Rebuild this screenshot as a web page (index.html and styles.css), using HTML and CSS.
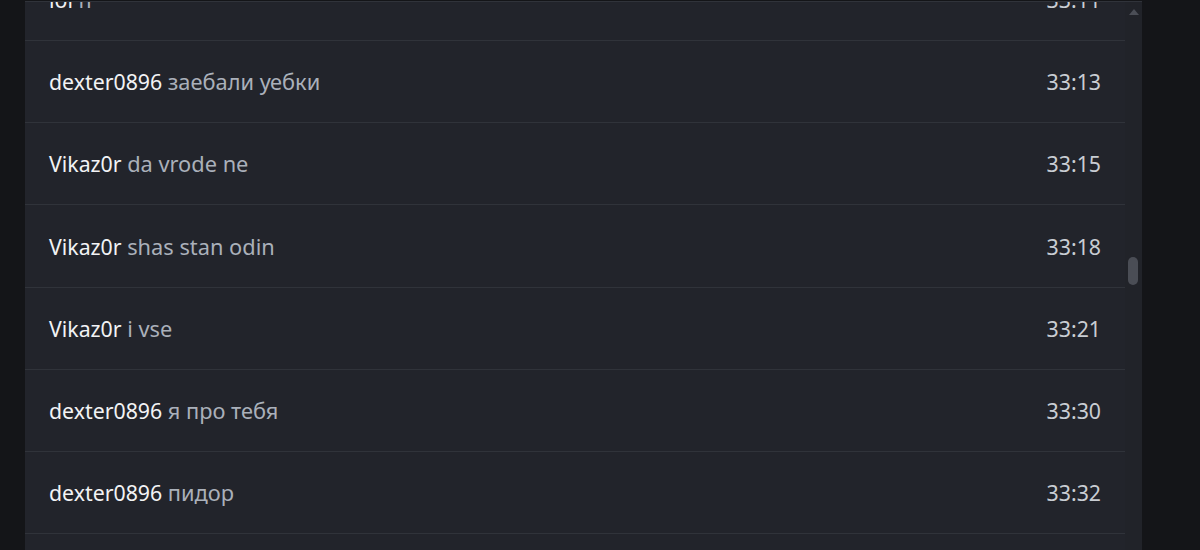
FILE: index.html
```html
<!DOCTYPE html>
<html>
<head>
<meta charset="utf-8">
<link rel="stylesheet" href="styles.css">
</head>
<body>
<div class="panel">
  <div class="list">
    <div class="rows">
      <div class="row"><div class="msg"><span class="user">lol</span> <span class="text">п</span></div><div class="time">33:11</div></div>
      <div class="row"><div class="msg"><span class="user">dexter0896</span> <span class="text">заебали уебки</span></div><div class="time">33:13</div></div>
      <div class="row"><div class="msg"><span class="user">Vikaz0r</span> <span class="text">da vrode ne</span></div><div class="time">33:15</div></div>
      <div class="row"><div class="msg"><span class="user">Vikaz0r</span> <span class="text">shas stan odin</span></div><div class="time">33:18</div></div>
      <div class="row"><div class="msg"><span class="user">Vikaz0r</span> <span class="text">i vse</span></div><div class="time">33:21</div></div>
      <div class="row"><div class="msg"><span class="user">dexter0896</span> <span class="text">я про тебя</span></div><div class="time">33:30</div></div>
      <div class="row"><div class="msg"><span class="user">dexter0896</span> <span class="text">пидор</span></div><div class="time">33:32</div></div>
      <div class="row"><div class="msg"><span class="user">Vikaz0r</span> <span class="text">ok</span></div><div class="time">33:35</div></div>
    </div>
  </div>
  <div class="scrollbar">
    <div class="arrow"></div>
    <div class="thumb"></div>
  </div>
</div>
</body>
</html>
```

FILE: styles.css
```css
html, body {
  margin: 0;
  padding: 0;
  background: #141518;
  height: 550px;
  overflow: hidden;
}
body {
  font-family: "Noto Sans", "Open Sans", sans-serif;
}
.panel {
  margin-left: 25px;
  margin-top: 1px;
  width: 1117px;
  height: 549px;
  background: #22242b;
  border-top: 1px solid #30333a;
  display: flex;
  overflow: hidden;
}
.list {
  flex: 1;
  overflow: hidden;
}
.rows {
  margin-top: -43px;
}
.row {
  height: 81.17px;
  border-bottom: 1px solid #30333a;
  display: flex;
  align-items: center;
  justify-content: space-between;
  padding: 0 24px;
  font-size: 21.3px;
}
.user {
  color: #f2f3f5;
}
.text {
  color: #aab0ba;
  font-size: 21.8px;
}
.time {
  color: #c9cdd3;
}
.scrollbar {
  width: 17px;
  position: relative;
  background: #212329;
}
.arrow {
  margin: 7px auto 0;
  width: 0;
  height: 0;
  border-left: 5px solid transparent;
  border-right: 5px solid transparent;
  border-bottom: 6px solid #4b4e56;
}
.thumb {
  position: absolute;
  left: 3px;
  top: 255px;
  width: 10px;
  height: 28px;
  border-radius: 5px;
  background: #4a4d55;
}
```
